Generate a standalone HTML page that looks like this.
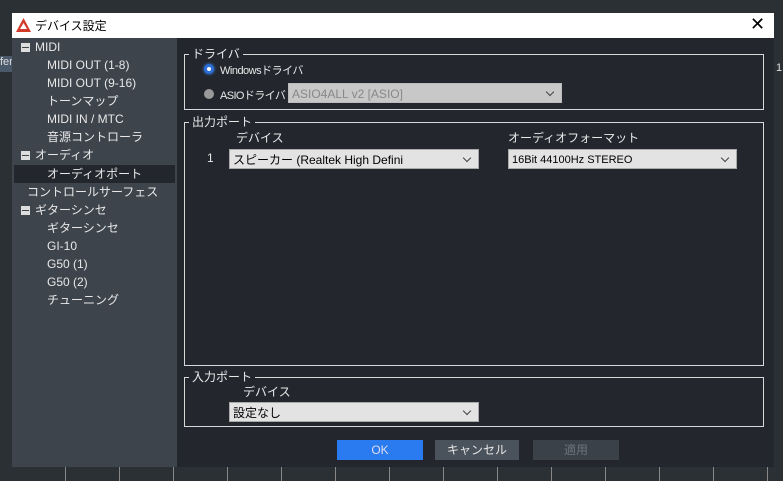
<!DOCTYPE html>
<html><head><meta charset="utf-8"><style>
*{margin:0;padding:0;box-sizing:border-box}
body{width:783px;height:481px;background:#2b3035;position:relative;overflow:hidden;font-family:"Liberation Sans","Noto Sans CJK JP",sans-serif;font-size:12px;color:#e8e8e8}
.a{position:absolute}
.title{left:12px;top:13px;width:762px;height:25px;background:#fff;color:#000}
.left{left:12px;top:38px;width:165px;height:429px;background:#3d444c}
.right{left:177px;top:38px;width:597px;height:429px;background:#23272d}
.ti{position:absolute;left:0;height:18px;line-height:18px;white-space:nowrap}
.box{position:absolute;border:1px solid #d8d8d8}
.lg{position:absolute;background:#23272d;padding:0 3px;line-height:14px;top:-8px;left:4px}
.sel{position:absolute;background:#e3e3e3;color:#000;height:20px;line-height:20px;padding-left:3px;border:1px solid #aaa;font-size:12px}
.sel:after{content:"";position:absolute;right:8px;top:5px;width:5px;height:5px;border-right:1px solid #444;border-bottom:1px solid #444;transform:rotate(45deg)}
.btn{position:absolute;top:440px;height:20px;line-height:20px;text-align:center}
.min{display:inline-block;width:9px;height:9px;background:#ddd;position:relative;margin-right:5px;vertical-align:-1px}
.min:after{content:"";position:absolute;left:1px;right:1px;top:4px;height:1px;background:#3d444c}
</style></head><body>
<div class="a" style="left:0;top:56px;width:12px;height:16px;background:#4a5a6a;color:#ddd;font-size:11px">fer</div>
<div class="a" style="left:776px;top:62px;color:#ddd;font-size:11px">1</div>
<div class="a" style="left:12px;top:467px;width:762px;height:14px;background:repeating-linear-gradient(90deg,transparent 0 53px,#888 53px 54px)"></div>
<div class="a title">
 <svg class="a" style="left:4px;top:5px" width="15" height="14" viewBox="0 0 15 14"><path d="M7.5 0L15 14H0z" fill="#d23a2a"/><path d="M7.5 5L11 11H4z" fill="#fff"/></svg>
 <div class="a" style="left:23px;top:4px;font-size:12px">デバイス設定</div>
 <div class="a" style="left:738px;top:1px;font-size:18px;font-weight:300">✕</div>
</div>
<div class="a left">
 <div class="ti" style="top:0;left:9px"><span class="min"></span>MIDI</div>
 <div class="ti" style="top:18px;left:35px">MIDI OUT (1-8)</div>
 <div class="ti" style="top:36px;left:35px">MIDI OUT (9-16)</div>
 <div class="ti" style="top:54px;left:35px">トーンマップ</div>
 <div class="ti" style="top:72px;left:35px">MIDI IN / MTC</div>
 <div class="ti" style="top:90px;left:35px">音源コントローラ</div>
 <div class="ti" style="top:108px;left:9px"><span class="min"></span>オーディオ</div>
 <div class="ti" style="top:127px;left:2px;width:161px;background:#23272d;padding-left:33px">オーディオポート</div>
 <div class="ti" style="top:145px;left:15px">コントロールサーフェス</div>
 <div class="ti" style="top:163px;left:9px"><span class="min"></span>ギターシンセ</div>
 <div class="ti" style="top:181px;left:35px">ギターシンセ</div>
 <div class="ti" style="top:199px;left:35px">GI-10</div>
 <div class="ti" style="top:217px;left:35px">G50 (1)</div>
 <div class="ti" style="top:235px;left:35px">G50 (2)</div>
 <div class="ti" style="top:253px;left:35px">チューニング</div>
</div>
<div class="a right"></div>
<div class="box" style="left:184px;top:54px;width:580px;height:56px"><div class="lg">ドライバ</div></div>
<div class="a" style="left:204px;top:64px;width:10px;height:10px;border-radius:50%;background:#fff;border:3px solid #2d6fd6;box-shadow:0 0 3px #3a8aff"></div>
<div class="a" style="left:220px;top:62px;font-size:11px;letter-spacing:-0.5px">Windowsドライバ</div>
<div class="a" style="left:204px;top:89px;width:10px;height:10px;border-radius:50%;background:#999"></div>
<div class="a" style="left:220px;top:87px;font-size:11px;letter-spacing:-0.6px">ASIOドライバ</div>
<div class="sel" style="left:288px;top:83px;width:274px;background:#c8c8c8;color:#888;border-color:#bbb">ASIO4ALL v2 [ASIO]</div>
<div class="box" style="left:184px;top:122px;width:580px;height:244px"><div class="lg">出力ポート</div></div>
<div class="a" style="left:236px;top:129px">デバイス</div>
<div class="a" style="left:508px;top:129px">オーディオフォーマット</div>
<div class="a" style="left:207px;top:151px">1</div>
<div class="sel" style="left:229px;top:149px;width:250px">スピーカー (Realtek High Defini</div>
<div class="sel" style="left:508px;top:149px;width:229px;font-size:11px">16Bit 44100Hz STEREO</div>
<div class="box" style="left:184px;top:377px;width:580px;height:50px"><div class="lg">入力ポート</div></div>
<div class="a" style="left:243px;top:383px">デバイス</div>
<div class="sel" style="left:229px;top:402px;width:250px">設定なし</div>
<div class="btn" style="left:337px;width:86px;background:#2a7af0;color:#dde">OK</div>
<div class="btn" style="left:435px;width:84px;background:#4a525b">キャンセル</div>
<div class="btn" style="left:533px;width:86px;background:#3a4149;color:#6c737a">適用</div>
</body></html>
